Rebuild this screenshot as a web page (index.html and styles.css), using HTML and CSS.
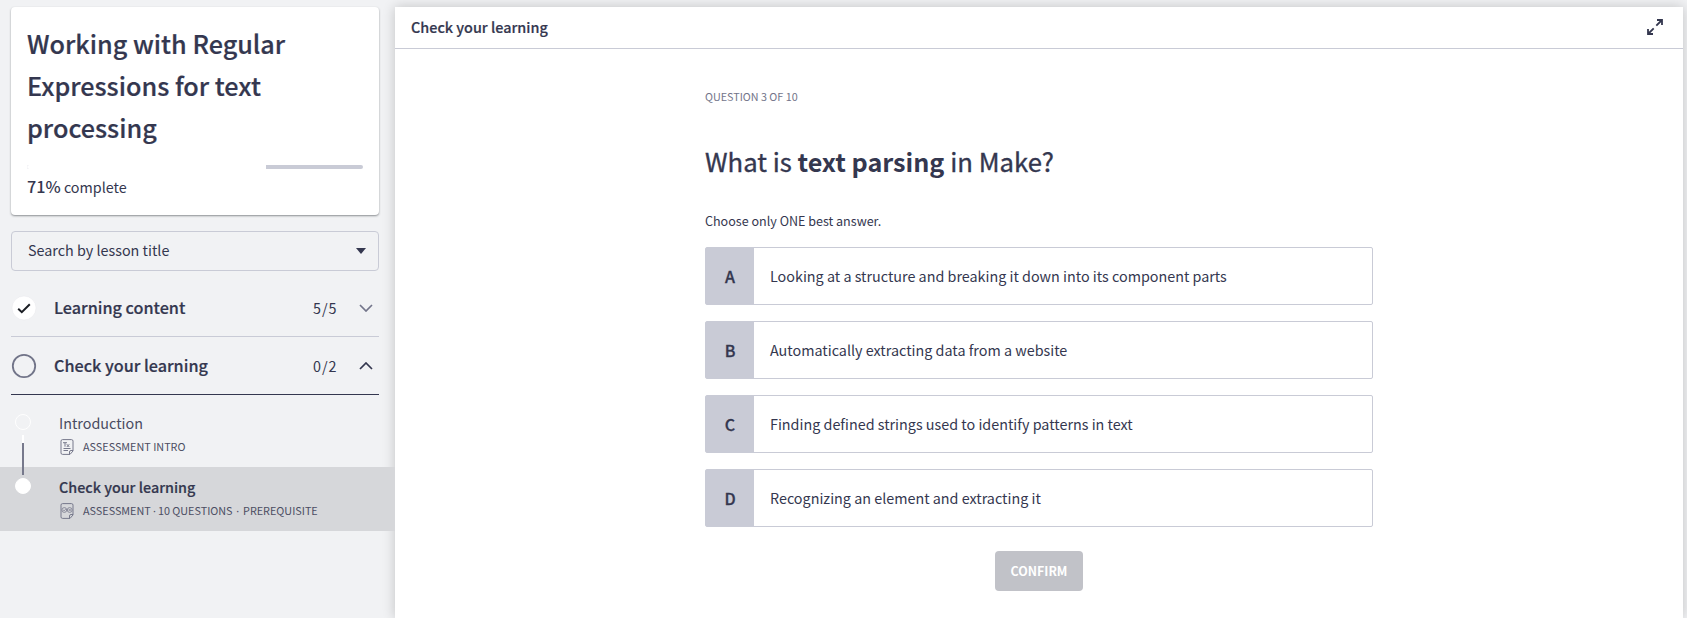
FILE: index.html
```html
<!DOCTYPE html>
<html lang="en">
<head>
<meta charset="utf-8">
<title>Check your learning</title>
<link rel="stylesheet" href="styles.css">
</head>
<body>
<div class="app">
  <aside class="sidebar">
    <section class="course-card">
      <h1 class="course-title">Working with Regular Expressions for text processing</h1>
      <div class="progress"><div class="progress-fill" style="width:71%"></div></div>
      <p class="progress-text"><strong class="percent">71%</strong> <span>complete</span></p>
    </section>
    <div class="search"><span class="search-label">Search by lesson title</span>
      <svg class="caret" width="10" height="6" viewBox="0 0 10 6"><path d="M0 0h10L5 6z" fill="#34374f"/></svg>
    </div>
    <div class="section">
      <svg class="status" width="26" height="26" viewBox="0 0 26 26"><circle cx="13" cy="13" r="12" fill="#fff" stroke="#e6e7ea" stroke-width=".5"/><path d="M7.2 13.8l3.6 3.4 8-8" fill="none" stroke="#1b1e24" stroke-width="2"/></svg>
      <span class="section-name">Learning content</span>
      <span class="count">5/5</span>
      <svg class="chevron" width="14" height="8" viewBox="0 0 14 8"><path d="M1 1l6 6 6-6" fill="none" stroke="#73758a" stroke-width="1.7"/></svg>
    </div>
    <div class="section section-open">
      <svg class="status" width="26" height="26" viewBox="0 0 26 26"><circle cx="13" cy="13" r="11.2" fill="none" stroke="#717488" stroke-width="1.8"/></svg>
      <span class="section-name">Check your learning</span>
      <span class="count">0/2</span>
      <svg class="chevron" width="14" height="8" viewBox="0 0 14 8"><path d="M1 7l6-6 6 6" fill="none" stroke="#34374f" stroke-width="1.7"/></svg>
    </div>
    <div class="lessons">
      <div class="lesson">
        <span class="dot"></span>
        <div class="lesson-body">
          <div class="lesson-name">Introduction</div>
          <div class="meta">
            <svg class="doc" width="14" height="16" viewBox="0 0 14 16" fill="none" stroke="#77798c"><path d="M2.5 .6h9a1.5 1.5 0 0 1 1.5 1.5v9.9L10 15.4H2.5a1.5 1.5 0 0 1-1.5-1.5V2.1A1.5 1.5 0 0 1 2.5 .6zM9.5 15.4v-2.4a1.5 1.5 0 0 1 1.5-1.5h2"/><path d="M3 3.7h4M5 3.7v4M6.8 5.2l2.5 2.8M9.3 5.2L6.8 8M3.5 9.5h7M3.5 11.5h4.5"/></svg>
            <span>ASSESSMENT INTRO</span>
          </div>
        </div>
      </div>
      <div class="lesson lesson-active">
        <span class="dot dot-active"></span>
        <div class="lesson-body">
          <div class="lesson-name">Check your learning</div>
          <div class="meta">
            <svg class="doc" width="14" height="16" viewBox="0 0 14 16" fill="none" stroke="#77798c"><path d="M2.5 .6h9a1.5 1.5 0 0 1 1.5 1.5v9.9L10 15.4H2.5a1.5 1.5 0 0 1-1.5-1.5V2.1A1.5 1.5 0 0 1 2.5 .6zM9.5 15.4v-2.4a1.5 1.5 0 0 1 1.5-1.5h2"/><circle cx="4.3" cy="7" r="2.4" stroke-width=".8"/><circle cx="9.7" cy="7" r="2.4" stroke-width=".8"/><path d="M3.2 7l.9.9L5.7 6.2M8.8 6.1l1.8 1.8M10.6 6.1L8.8 7.9" stroke-width=".8"/></svg>
            <span>ASSESSMENT <span class="sep">·</span> 10 QUESTIONS <span class="sep sep-wide">·</span> PREREQUISITE</span>
          </div>
        </div>
      </div>
      <span class="connector"></span>
    </div>
  </aside>
  <main class="panel">
    <header class="panel-header">
      <h2 class="panel-title">Check your learning</h2>
      <svg class="expand" width="16" height="16" viewBox="0 0 16 16" fill="none" stroke="#34374f" stroke-width="1.8"><path d="M10 1h5v5M15 1L9.3 6.7M1 10v5h5M1 15l5.7-5.7"/></svg>
    </header>
    <div class="quiz">
      <p class="step">QUESTION 3 OF 10</p>
      <h3 class="question">What is <strong>text parsing</strong> in Make?</h3>
      <p class="hint">Choose only ONE best answer.</p>
      <div class="options">
        <div class="option"><span class="key">A</span><span class="answer">Looking at a structure and breaking it down into its component parts</span></div>
        <div class="option"><span class="key">B</span><span class="answer">Automatically extracting data from a website</span></div>
        <div class="option"><span class="key">C</span><span class="answer">Finding defined strings used to identify patterns in text</span></div>
        <div class="option"><span class="key">D</span><span class="answer">Recognizing an element and extracting it</span></div>
      </div>
      <button class="confirm">CONFIRM</button>
    </div>
  </main>
</div>
</body>
</html>
```
FILE: styles.css
```css
* { box-sizing: border-box; margin: 0; padding: 0; }
body {
  background: #f1f2f4;
  color: #34374f;
  font-family: "Noto Sans CJK SC", sans-serif;
  font-size: 14.35px;
  overflow: hidden;
}
svg { display: block; flex: none; }
.app { display: flex; height: 618px; padding: 7px 4px 0 0; white-space: nowrap; }
.sidebar { width: 395px; flex: none; }
.course-card {
  width: 368px; height: 208px; margin-left: 11px; padding: 15px 16px 0 16px;
  background: #fff; border-radius: 4px; box-shadow: 0 1px 2px rgba(40, 45, 50, .5);
}
.course-title { font-size: 25.2px; line-height: 42px; font-weight: 500; white-space: normal; -webkit-text-stroke: .2px; }
.progress { height: 4px; margin-top: 17px; border-radius: 2px; background: #c9cbd6; overflow: hidden; }
.progress-fill { height: 4px; background: #fff; }
.progress-text { margin-top: 5px; line-height: 24px; }
.percent { font-size: 16.2px; font-weight: 500; }
.search {
  display: flex; align-items: center; justify-content: space-between;
  width: 368px; height: 40px; margin: 16px 0 8px 11px; padding: 0 12px 0 16px;
  border: 1px solid #c9cbd6; border-radius: 4px;
}
.search-label { padding-bottom: 3px; }
.section {
  display: flex; align-items: center; width: 368px; height: 58px; margin-left: 11px;
  border-bottom: 1px solid #c9cbd6;
}
.section-open { border-color: #34374f; }
.section-name { width: 259px; margin-left: 17px; padding-bottom: 2px; font-size: 16.2px; font-weight: 500; -webkit-text-stroke: .2px; }
.count { width: 46px; letter-spacing: 1px; }
.lessons { position: relative; padding-top: 8px; }
.lesson { display: flex; height: 64px; padding: 11px 0 0 15px; }
.lesson-active { background: #d6d7da; }
.dot { width: 16px; height: 16px; border: 1px solid #fff; border-radius: 50%; }
.dot-active { background: #fff; }
.lesson-body { margin: -1px 0 0 28px; }
.lesson-name { line-height: 20px; color: #484a60; }
.lesson-active .lesson-name { font-weight: 500; color: #34374f; -webkit-text-stroke: .2px; }
.meta { display: flex; align-items: center; gap: 9px; height: 16px; margin-top: 5px; font-size: 10.8px; color: #4c4e63; }
.doc { margin: 2px 0 0 1px; }
.sep { font-family: "Noto Sans", sans-serif; margin: 0 -.3px; }
.sep-wide { margin: 0 1.4px; }
.connector {
  position: absolute; left: 22px; top: 40px; width: 2px; height: 40px;
  background: linear-gradient(#fff 8px, #77798c 8px);
}
.panel { width: 1288px; background: #fff; box-shadow: 0 0 12px rgba(0, 0, 0, .2); }
.panel-header {
  display: flex; align-items: center; justify-content: space-between;
  height: 42px; padding: 0 20px 2px 16px; border-bottom: 1px solid #c9cbd6;
}
.panel-title { font-size: 14.4px; font-weight: 500; -webkit-text-stroke: .2px; }
.quiz { width: 668px; margin-left: 310px; padding-top: 38px; }
.step { font-size: 10.75px; line-height: 20px; color: #73758a; }
.question { margin-top: 33px; font-size: 25.7px; line-height: 42px; font-weight: 400; -webkit-text-stroke: .35px; }
.question strong { font-size: 25.2px; font-weight: 700; -webkit-text-stroke: 0; }
.hint { margin-top: 29px; font-size: 12.55px; line-height: 20px; }
.options { display: grid; gap: 16px; margin-top: 16px; }
.option { display: flex; height: 58px; border: 1px solid #c9cbd6; border-radius: 2px; }
.key {
  display: flex; align-items: center; justify-content: center; flex: none;
  width: 48px; padding-bottom: 1px; background: #c9cbd6; font-size: 16px; font-weight: 500; -webkit-text-stroke: .3px;
}
.answer { padding-left: 16px; line-height: 56px; }
.confirm {
  display: block; width: 88px; height: 40px; margin: 24px auto 0; padding-bottom: 1px; border: 0; border-radius: 4px;
  background: #c1c2c8; color: #fff; font: 700 12.4px "Noto Sans CJK SC", sans-serif;
}
```
